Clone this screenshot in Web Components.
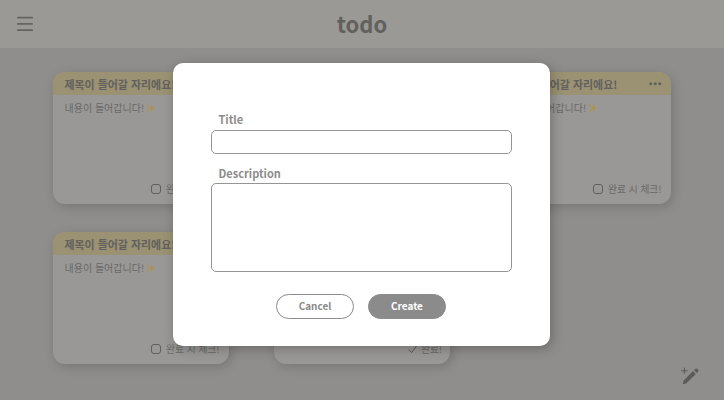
<!DOCTYPE html>
<html lang="ko">
<head>
<meta charset="utf-8">
<title>todo</title>
<style>
html,body{margin:0;height:100%;overflow:hidden}
body{font-family:"Noto Sans CJK KR","Noto Sans",sans-serif;color:#62615e;background:#8f8e8c}
</style>
</head>
<body>
<todo-app></todo-app>
<script>
const define = (name, html) => customElements.define(name, class extends HTMLElement {
  constructor() {
    super();
    const t = document.createElement('template');
    t.innerHTML = html;
    this.attachShadow({mode: 'open'}).append(t.content.cloneNode(true));
  }
});

define('todo-header', `
<style>
:host{display:grid;grid-template-columns:1fr auto 1fr;align-items:center;height:48px;background:#9a9996;box-sizing:border-box;padding:0 17px}
svg{display:block}
h1{margin:0;font-size:22px;line-height:46px;height:48px;font-weight:700;color:#62615e}
</style>
<svg width="16" height="16" viewBox="0 0 16 16" stroke="#65645f" stroke-width="1.9" stroke-linecap="round"><path d="M.9 1.6h14.2M.9 7.9h14.2M.9 14.1h14.2"/></svg>
<h1><slot></slot></h1>`);

define('todo-sparkles', `
<style>:host{display:inline-block;width:10px;height:10px}svg{display:block}</style>
<svg width="10" height="10" viewBox="0 0 10 10" fill="#ae9339"><path d="M5.7 1.4Q6 4.6 9.3 5Q6 5.4 5.7 8.7Q5.3 5.4 2.5 5Q5.3 4.6 5.7 1.4ZM1.6.7Q1.8 1.9 3 2.2Q1.8 2.5 1.6 3.8Q1.4 2.5.3 2.2Q1.4 1.9 1.6.7ZM2.1 6.3Q2.3 7.5 3.6 7.8Q2.3 8.1 2.1 9.4Q1.9 8.1.7 7.8Q1.9 7.5 2.1 6.3Z"/></svg>`);

define('todo-check', `
<style>
:host{display:flex;align-items:center;gap:5px;font-size:9.75px;line-height:15px;color:#696866}
i{box-sizing:border-box;width:10px;height:10px;border:1px solid #5f5e5c;border-radius:3px}
svg{display:none}
span{transform:translateY(-.5px)}
:host([done]) i{display:none}
:host([done]) svg{display:block}
:host([done]){gap:3px;margin-right:-1.5px}
</style>
<i></i><svg width="10" height="10" viewBox="0 0 10 10" fill="none" stroke="#5c5b59" stroke-width="1"><path d="M.8 5.4 3.6 8.6 9.2 1.2"/></svg><span><slot></slot></span>`);

define('todo-card', `
<style>
:host{display:flex;flex-direction:column;width:176px;height:132px;border-radius:12px;overflow:hidden;background:#999896;box-shadow:2px 3px 11px rgba(0,0,0,.17)}
header{display:flex;align-items:center;justify-content:space-between;height:23px;padding:1px 9px 0 11.5px;box-sizing:border-box;background:#9a9273;font-size:10.95px;font-weight:700;line-height:22px;white-space:nowrap}
.body{flex:1;padding:4px 11.5px;font-size:10px;line-height:17px;color:#696866;display:flex;align-items:flex-start;gap:2px}
todo-sparkles{margin-top:4px}
footer{display:flex;justify-content:flex-end;padding:0 9.5px 7.5px}
svg{display:block}
</style>
<header><slot name="title"></slot><svg width="13" height="4" viewBox="0 0 13 4" fill="#64625a"><circle cx="1.8" cy="1.7" r="1.55"/><circle cx="6.3" cy="1.7" r="1.55"/><circle cx="10.8" cy="1.7" r="1.55"/></svg></header>
<div class="body"><slot></slot><todo-sparkles></todo-sparkles></div>
<footer><slot name="status"></slot></footer>`);

define('todo-field', `
<style>
:host{display:flex;flex-direction:column;color:#8c8c8b}
label{padding-left:7.5px;font-size:11px;line-height:18px;font-weight:700}
div{box-sizing:border-box;margin-top:2px;height:24px;border:1px solid #959595;border-radius:5px}
:host([multiline]) div{height:88.5px;margin-top:1px}
</style>
<label><slot></slot></label><div></div>`);

define('todo-button', `
<style>
:host{box-sizing:border-box;display:flex;align-items:center;justify-content:center;width:78px;height:25px;border:1px solid #8b8b8b;border-radius:13px;color:#8b8b8b;font-size:9.95px;line-height:23px;font-weight:700}
:host([primary]){background:#8b8b8b;color:#fff}
span{transform:translateY(-1px)}
</style><span><slot></slot></span>`);

define('todo-dialog', `
<style>
:host{display:flex;flex-direction:column;box-sizing:border-box;width:377px;height:283px;padding:47px 38px 0;background:#fff;border-radius:10px;box-shadow:2px 3px 12px rgba(0,0,0,.25)}
todo-field+todo-field{margin-top:10px}
.actions{display:flex;justify-content:center;gap:14px;margin:22.5px 1px 0 0}
</style>
<todo-field>Title</todo-field>
<todo-field multiline>Description</todo-field>
<div class="actions"><todo-button>Cancel</todo-button><todo-button primary>Create</todo-button></div>`);

define('todo-app', `
<style>
:host{display:block;position:relative;width:724px;height:400px;overflow:hidden;background:#8f8e8c}
main{display:grid;grid-template-columns:repeat(3,176px);gap:28px 45px;padding:24px 53px}
todo-dialog{position:absolute;left:173px;top:63px}
.write{position:absolute;left:680px;top:366px}
</style>
<todo-header>todo</todo-header>
<main></main>
<svg class="write" width="20" height="20" viewBox="0 0 20 20" fill="#5c5b59"><path d="M2.8 18.2 3.6 14.4 13 5.1 15.8 7.9 6.4 17.2ZM14 4.1 15.1 3.1Q16.2 2 17.3 3L18 3.8Q19 4.8 18 5.9L16.9 6.9Z"/><path d="M4.4 1.6v6.4M1.2 4.8h6.4" stroke="#5c5b59" stroke-width="1" fill="none"/></svg>
<todo-dialog></todo-dialog>`);

const main = document.querySelector('todo-app').shadowRoot.querySelector('main');
[false, false, false, false, true].forEach(done => {
  const card = document.createElement('todo-card');
  card.innerHTML = `<span slot="title">제목이 들어갈 자리에요!</span><span>내용이 들어갑니다!</span><todo-check slot="status"${done ? ' done' : ''}>${done ? '완료!' : '완료 시 체크!'}</todo-check>`;
  main.append(card);
});
</script>
</body>
</html>
